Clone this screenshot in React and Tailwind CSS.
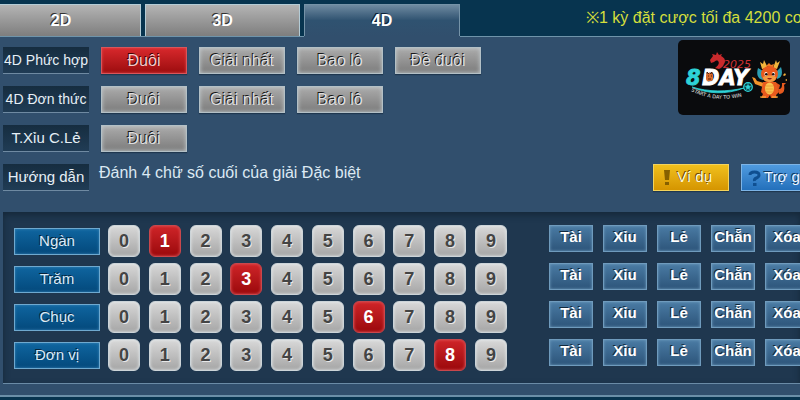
import { useState } from "react";

const tabs = ["2D", "3D", "4D"];

const betRows = [
  { label: "4D Phức hợp", compact: true, options: ["Đuôi", "Giải nhất", "Bao lô", "Đề đuôi"] },
  { label: "4D Đơn thức", compact: true, options: ["Đuôi", "Giải nhất", "Bao lô"] },
  { label: "T.Xỉu C.Lẻ", compact: false, options: ["Đuôi"] },
];

const places = ["Ngàn", "Trăm", "Chục", "Đơn vị"];
const digits = [0, 1, 2, 3, 4, 5, 6, 7, 8, 9];
const shortcuts = ["Tài", "Xỉu", "Lẻ", "Chẵn", "Xóa"];

function RowLabel({ children, compact }) {
  return (
    <div
      className={`flex h-[27px] w-[86px] shrink-0 items-center justify-center whitespace-nowrap border-b border-[#6f8aa2] bg-gradient-to-b from-[#162d40] to-[#203c55] text-[#e6eff6] ${
        compact ? "text-[14px]" : "text-[15px]"
      }`}
    >
      {children}
    </div>
  );
}

function BetButton({ active, onClick, children }) {
  return (
    <button
      type="button"
      aria-pressed={active}
      onClick={onClick}
      className={`h-[27px] w-[86px] whitespace-nowrap border text-[16px] leading-6 ${
        active
          ? "border-[#d9555a] bg-gradient-to-b from-[#d8282c] to-[#9c0c0e] text-[#f6caca] shadow-[0_1px_1px_#1f374f,inset_0_0_3px_#e0484c] [text-shadow:-1px_-1px_0_#3d0303]"
          : "border-[#b3c0c6] bg-gradient-to-b from-[#ababab] to-[#7c7c7c] text-[#dedede] shadow-[0_1px_1px_#1f374f,inset_0_0_4px_#c4ccd0] [text-shadow:-1px_-1px_0_#181818]"
      }`}
    >
      {children}
    </button>
  );
}

function Logo() {
  return (
    <svg viewBox="0 0 112 75" className="block h-[75px] w-[112px] rounded-[5px] bg-[#0a0b0d]" role="img" aria-label="8DAY">
      <path
        d="M32 20l3-4-1-2 4 1 1-3 2 3 3-1-1 2c4 2 5 5 3 8-1 3-3 4-5 5l-4-1c3-2 5-5 3-7-1-1-3 0-4 1l-3 1z"
        fill="#c92a2c"
      />
      <g fontFamily="'DejaVu Sans', sans-serif" fontStyle="italic" fontWeight="bold">
        <text x="8" y="45" fontSize="21" fill="#2ed3d7" stroke="#2ed3d7" strokeWidth="0.8">8</text>
        <text x="24" y="45" fontSize="21" fill="#ffffff" stroke="#ffffff" strokeWidth="0.8">DAY</text>
      </g>
      <text x="45" y="28" fontSize="11" fill="#cf3033" fontFamily="'DejaVu Sans', sans-serif" fontStyle="italic">
        2025
      </text>
      <rect x="28" y="33" width="7" height="8" rx="2" fill="#d96a2a" />
      <path d="M29 34v-2l2 2M34 34v-2l-2 2M30 36h1M33 36h1M30 39h3" stroke="#5a230c" strokeWidth="1" fill="none" />
      <path d="M14 47C29 54 48 55 66 48C49 52 30 52 14 47z" fill="#2ed3d7" stroke="#2ed3d7" strokeWidth="0.8" />
      <circle cx="70" cy="47" r="4.3" fill="#0a3b3f" stroke="#2ed3d7" strokeWidth="1.2" />
      <path d="M70 45l2 1.5-.8 2.3h-2.4l-.8-2.3zM70 45v-2M72 46.5l2-.8M71.2 48.8l1.2 1.8M68.8 48.8l-1.2 1.8M68 46.5l-2-.8" fill="#2ed3d7" stroke="#2ed3d7" strokeWidth="0.7" />
      <path id="logo-arc" d="M13 51Q41 65 72 54" fill="none" />
      <text fontSize="5" fill="#e4e4e4" fontFamily="'DejaVu Sans', sans-serif">
        <textPath href="#logo-arc">START A DAY TO WIN</textPath>
      </text>
      <g>
        <path d="M101 54c5 0 6-4 5-9l2-2-4 0c0 4 0 6-4 6z" fill="#e65a1e" />
        <path d="M105 35l2-2 1 2-2 1zM107 40l2-1 0 2z" fill="#f6b13a" />
        <path d="M84 29l-2-7 3 2 1-4 4 8zM95 28l3-8 1 3 3-2-3 8z" fill="#f2b53c" />
        <path d="M88 26l3-3 2 2 3-1-1 4z" fill="#ef7a22" />
        <path d="M80 28l5 3v9c-5-1-7-5-5-12zM103 27l-4 4 0 8c5-1 6-6 4-12z" fill="#2c9eb3" />
        <ellipse cx="91.5" cy="34" rx="8.5" ry="8" fill="#e9591d" />
        <path d="M85 37c3-2 10-2 13 0 0 4-3 5-6.5 5S85 41 85 37z" fill="#f39b42" />
        <ellipse cx="88" cy="34" rx="1.6" ry="2" fill="#fff" />
        <ellipse cx="95.5" cy="34" rx="1.6" ry="2" fill="#fff" />
        <circle cx="88.3" cy="34.3" r="1.3" fill="#22150f" />
        <circle cx="95.2" cy="34.3" r="1.3" fill="#22150f" />
        <path d="M89 38q3 3 5 0z" fill="#8f1813" />
        <path d="M74 37l3 1 2 3 7 2-1 4-8-3z" fill="#f1952b" />
        <path d="M97 42l5 3-1 4-5-1z" fill="#e0501a" />
        <path d="M85 42h13l3 10-3 3 1 3h-6l-1-3-2 3h-7l2-4-2-2z" fill="#e75a1d" />
        <ellipse cx="91.5" cy="48.5" rx="4.5" ry="6" fill="#f9c44f" />
        <path d="M88 46h7M87.5 49h8M88 52h7" stroke="#de8c25" strokeWidth="0.6" />
        <path d="M82 57h6M94 57h6" stroke="#f9bd42" strokeWidth="1.2" />
      </g>
    </svg>
  );
}

export default function App() {
  const [tab, setTab] = useState("4D");
  const [bet, setBet] = useState("0-0");
  const [picked, setPicked] = useState([1, 3, 6, 8]);

  const pick = (row, value) => setPicked(picked.map((p, i) => (i === row ? value : p)));

  return (
    <div className="min-h-screen overflow-hidden bg-[#07344f] font-['Liberation_Sans',Arial,sans-serif] text-[16px]">
      <header className="flex items-end pt-1">
        <nav className="flex">
          {tabs.map((name, i) => (
            <div key={name} className={`border-b border-[#6f94aa] ${i === 0 ? "w-[145px] pr-1" : i === 1 ? "w-[159px] pr-1" : "w-[156px] border-b-[#314f6d]"}`}>
              <button
                type="button"
                aria-pressed={tab === name}
                onClick={() => setTab(name)}
                className={`block h-8 w-full border-t border-r font-bold text-white ${i === 0 ? "pr-[18px]" : "border-l"} ${
                  tab === name
                    ? "border-[#7593a8] bg-gradient-to-b from-[#6f8ba1] via-[#2f5270] to-[#314f6d] [text-shadow:-1px_-1px_0_#0b2236]"
                    : "border-[#b4ccd6] bg-gradient-to-b from-[#b4b4b4] to-[#7e7e7e] [text-shadow:-1px_-1px_0_#303030]"
                }`}
              >
                {name}
              </button>
            </div>
          ))}
        </nav>
        <p className="flex h-[33px] min-w-0 flex-1 items-center justify-end border-b border-[#6f94aa] pb-1">
          <span className="w-[214px] whitespace-nowrap text-[#d3de3c]">※1 kỳ đặt cược tối đa 4200 co</span>
        </p>
      </header>

      <main className="border-b-2 border-[#6b8fa8] bg-[#314f6d] pb-[11px] pl-[3px]">
        <div className="flex justify-between">
          <section className="flex flex-col gap-3 pt-[10px]">
            {betRows.map((row, r) => (
              <div key={row.label} className="flex gap-3">
                <RowLabel compact={row.compact}>{row.label}</RowLabel>
                {row.options.map((name, i) => (
                  <BetButton key={name} active={bet === `${r}-${i}`} onClick={() => setBet(`${r}-${i}`)}>
                    {name}
                  </BetButton>
                ))}
              </div>
            ))}
            <div className="flex gap-[10px]">
              <RowLabel>Hướng dẫn</RowLabel>
              <p className="whitespace-nowrap leading-[18px] text-[#dce9f3]">Đánh 4 chữ số cuối của giải Đặc biệt</p>
            </div>
          </section>

          <aside className="flex w-[147px] shrink-0 flex-col justify-between pt-[3px]">
            <div className="flex justify-end pr-[10px]">
              <Logo />
            </div>
            <div className="flex gap-3 text-[15px]">
              <button
                type="button"
                className="flex h-[27px] w-[76px] shrink-0 items-center gap-1 whitespace-nowrap border border-[#f3d35c] bg-gradient-to-b from-[#f0c01c] to-[#d59500] pl-[9px] text-[#fdf6dc] shadow-[0_1px_1px_#1f374f] [text-shadow:-1px_-1px_0_#6b4a00]"
              >
                <svg viewBox="0 0 8 16" className="h-4 w-2" aria-hidden="true">
                  <path d="M1 0h6L6 10H2zM2 12h4v3H2z" fill="#866000" />
                </svg>
                <span className="pl-[2px]">Ví dụ</span>
              </button>
              <button
                type="button"
                className="flex h-[27px] w-[96px] shrink-0 items-center gap-[3px] whitespace-nowrap border border-[#7db4e6] bg-gradient-to-b from-[#4f9be0] to-[#2370bb] pl-[6px] text-[#eaf5ff] shadow-[0_1px_1px_#1f374f] [text-shadow:-1px_-1px_0_#0d365f]"
              >
                <svg viewBox="0 0 13 16" className="h-4 w-[13px]" aria-hidden="true">
                  <path d="M2 5Q2 2 6.5 2T11 5Q11 7 8.5 8T6.5 11" fill="none" stroke="#0f4f91" strokeWidth="3" />
                  <path d="M5 13h3.5v3H5z" fill="#0f4f91" />
                </svg>
                Trợ giúp
              </button>
            </div>
          </aside>
        </div>

        <section className="mt-[21px] flex justify-between border-b border-[#6a8ba6] bg-[#1f374f] pb-3 pl-[11px] pt-[13px] shadow-[inset_0_3px_6px_#152839]">
          <div className="flex flex-col gap-[6px]">
            {places.map((place, r) => (
              <div key={place} className="flex gap-2">
                <div className="mt-[3px] flex h-[27px] w-[86px] items-center justify-center border border-[#6fa9cf] bg-gradient-to-b from-[#0f659f] to-[#04497c] text-[15px] text-[#dcebf5] shadow-[inset_0_0_3px_#3b86b8] [text-shadow:-1px_-1px_0_#06233b]">
                  {place}
                </div>
                <div className="flex w-[399px] justify-between">
                  {digits.map((d) => (
                    <button
                      key={d}
                      type="button"
                      aria-pressed={picked[r] === d}
                      onClick={() => pick(r, d)}
                      className={`size-8 rounded-[6px] border text-[18px] font-bold leading-none ${
                        picked[r] === d
                          ? "border-[#c9474c] bg-gradient-to-b from-[#cf2428] to-[#9b080b] text-white shadow-[inset_0_0_3px_#e0585c]"
                          : "border-[#ccd4d8] bg-gradient-to-b from-[#d8d8d8] to-[#a6a6a6] text-[#444444] shadow-[inset_0_0_3px_#e6ecef] [text-shadow:1px_1px_0_#e8e8e8]"
                      }`}
                    >
                      {d}
                    </button>
                  ))}
                </div>
              </div>
            ))}
          </div>
          <div className="flex w-[251px] flex-col gap-[11px]">
            {places.map((place) => (
              <div key={place} className="flex gap-[10px]">
                {shortcuts.map((name) => (
                  <button
                    key={name}
                    type="button"
                    aria-label={`${place} ${name}`}
                    className="flex h-[27px] w-11 shrink-0 items-center justify-center whitespace-nowrap border border-[#6f9bbd] bg-gradient-to-b from-[#4a7ba4] to-[#2d557a] pb-[2px] text-[15px] font-bold text-white shadow-[inset_0_0_3px_#6f9bbd] [text-shadow:-1px_-1px_0_#12293d]"
                  >
                    {name}
                  </button>
                ))}
              </div>
            ))}
          </div>
        </section>
      </main>
    </div>
  );
}
